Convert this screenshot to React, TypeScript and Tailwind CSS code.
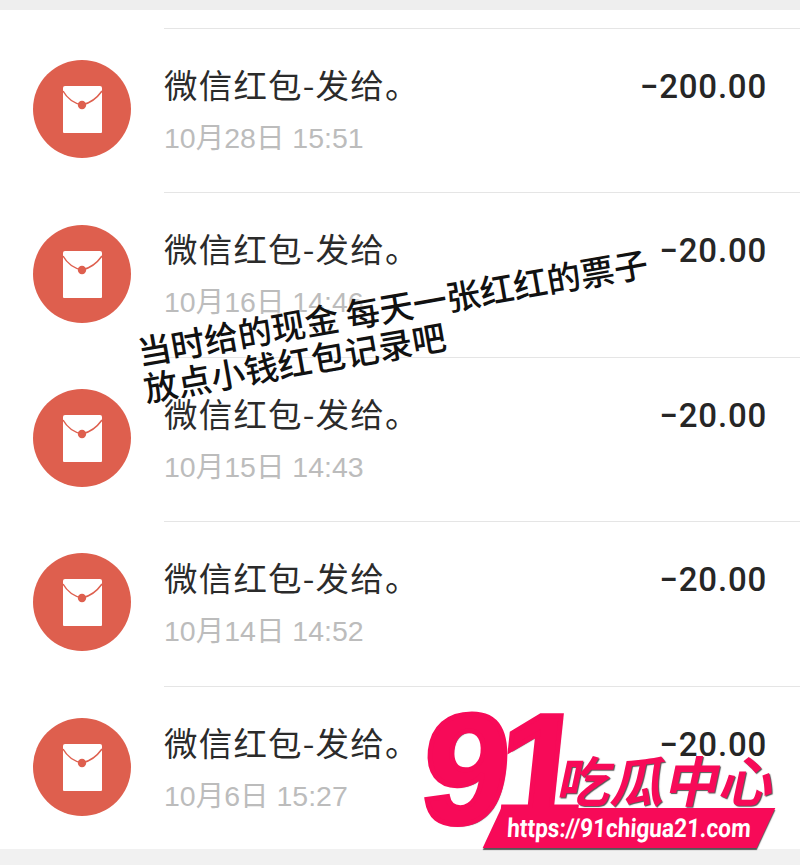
const records = [
  { date: "10月28日 15:51", amount: "−200.00" },
  { date: "10月16日 14:46", amount: "−20.00" },
  { date: "10月15日 14:43", amount: "−20.00" },
  { date: "10月14日 14:52", amount: "−20.00" },
  { date: "10月6日 15:27", amount: "−20.00" },
];

const cjk = "font-['Noto_Sans_CJK_SC','Noto_Sans',sans-serif]";

function PacketIcon() {
  return (
    <svg viewBox="0 0 98 98" className="mb-[4px] h-[98px] w-[98px] shrink-0">
      <circle cx="49" cy="49" r="49" fill="#de5f4e" />
      <path d="M30 28 a2 2 0 0 1 2-2 h35 a2 2 0 0 1 2 2 v44 a1 1 0 0 1-1 1 h-37 a1 1 0 0 1-1-1z" fill="#fff" />
      <path d="M30 31 C34 38 40 43 49 45 C58 43 64 38 69 31" fill="none" stroke="#de5f4e" strokeWidth="1.5" />
      <circle cx="49" cy="45" r="4.2" fill="#de5f4e" />
    </svg>
  );
}

function Row({ date, amount }: { date: string; amount: string }) {
  return (
    <div className="flex h-[164.4px] items-center pl-[33px]">
      <PacketIcon />
      <div className="ml-[33px] flex h-full flex-1 justify-between border-b border-[#e5e5e5] pr-[33px] pt-[32px]">
        <div>
          <div className={`${cjk} text-[33.5px] leading-[46px] tracking-[1.2px] text-[#2b2b2b]`}>微信红包-发给。</div>
          <div className="mt-[9px] font-['Liberation_Sans','Noto_Sans_CJK_SC',sans-serif] text-[28.5px] leading-[44px] text-[#bcbcbc]">{date}</div>
        </div>
        <div className="mt-[3px] font-['Roboto',sans-serif] text-[33px] font-medium leading-[46px] tracking-[0.8px] text-[#262626]">{amount}</div>
      </div>
    </div>
  );
}

function Logo() {
  return (
    <div className="absolute left-[420px] top-[708px] h-[150px] w-[360px]">
      <div className="absolute left-[3px] top-[-24px] skew-x-[-6deg] font-['Liberation_Sans',sans-serif] text-[156px] font-bold leading-[170px] tracking-[-12px] text-[#f70a58] [-webkit-text-stroke:5px_#f70a58] [text-shadow:2px_2px_1px_#666]">
        91
      </div>
      <div className="absolute left-[140px] top-[41px] skew-x-[-12deg] font-['Noto_Sans_CJK_SC',sans-serif] text-[54px] font-bold leading-[60px] text-[#f70a58] [text-shadow:1px_1px_1px_#555] whitespace-nowrap">
        吃瓜中心
      </div>
      <div className="absolute left-[72px] top-[100px] flex h-[40px] w-[274px] skew-x-[-25deg] items-center justify-center bg-[#f70a58] shadow-[1px_2px_1px_#555]">
        <span className="skew-x-[25deg] scale-x-[0.87] font-['Roboto',sans-serif] text-[26px] font-bold leading-none whitespace-nowrap text-white">
          https://91chigua21.com
        </span>
      </div>
    </div>
  );
}

export default function App() {
  return (
    <div className="relative h-[865px] w-[800px] overflow-hidden bg-white">
      <div className="h-[10px] bg-[#eeeeee]" />
      <div className="ml-[164px] mt-[18px] border-t border-[#e5e5e5]" />
      <div className="flex flex-col">
        {records.map((r) => (
          <Row key={r.date} date={r.date} amount={r.amount} />
        ))}
      </div>
      <div className="absolute inset-x-0 bottom-0 h-[16px] bg-[#f1f1f1]" />

      <div className={`${cjk} absolute left-[147px] top-[332px] origin-bottom-left rotate-[-10deg] text-[34px] leading-[37px] whitespace-nowrap text-[#111] font-medium [text-shadow:0_0_4px_#fff]`}>
        <div>当时给的现金 每天一张红红的票子</div>
        <div>放点小钱红包记录吧</div>
      </div>

      <Logo />
    </div>
  );
}
